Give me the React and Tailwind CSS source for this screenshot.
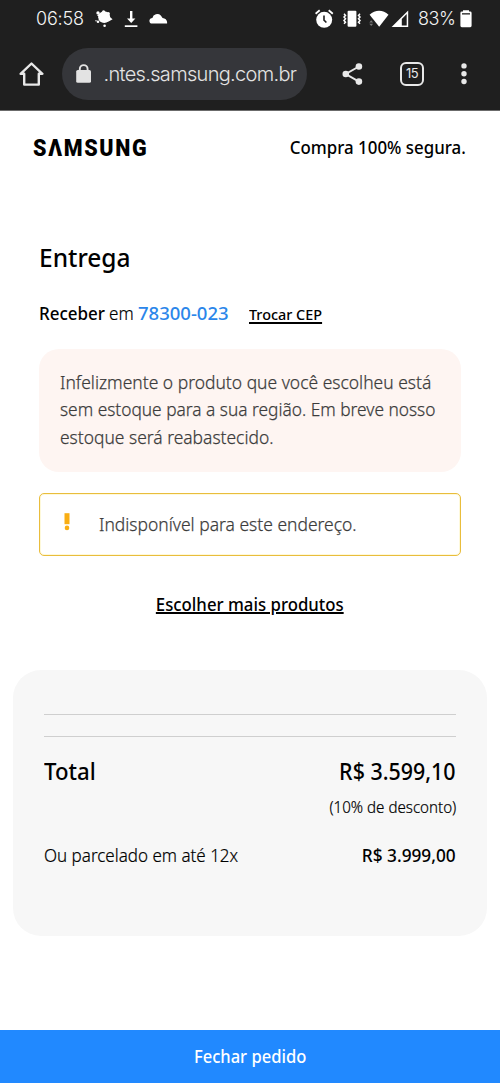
function BlobIcon() {
  return (
    <svg className="h-[18px] w-[18px]" viewBox="0 0 18 18" fill="#fff">
      <ellipse cx="9.200" cy="7.200" rx="6" ry="5.900" />
      <circle cx="3" cy="2.900" r="1.700" />
      <circle cx="8.600" cy="1.900" r="1.600" />
      <circle cx="13.200" cy="3.600" r="1.700" />
      <path d="M13.500 6 17.600 9.200 13.200 11.800ZM2 5.200 5.500 3v5Z" />
      <circle cx="1" cy="10.700" r=".7" />
      <circle cx="3" cy="11.700" r="1.300" />
      <circle cx="9.600" cy="15.700" r="1.300" />
    </svg>
  );
}

function DownloadIcon() {
  return (
    <svg className="h-[18px] w-[14px]" viewBox="0 0 14 18" fill="#fff">
      <path d="M6 1h2.400v7.600h3L7.200 13 3 8.600h3Z" />
      <rect x=".8" y="15.300" width="12.600" height="1.700" />
    </svg>
  );
}

function CloudIcon() {
  return (
    <svg className="h-[12px] w-[19px]" viewBox="0 0 19 12" fill="#fff">
      <path d="M3.600 10.600A3 3 0 0 1 .4 7.700C.4 6 1.700 4.900 3.400 4.900A5 5 0 0 1 11.800 2.400L13.600 4.900c2.500.2 4.500 2 4.500 4.300V10.600Z" />
    </svg>
  );
}

function AlarmIcon() {
  return (
    <svg className="h-[20px] w-[20px]" viewBox="0 0 20 20" fill="none">
      <circle cx="10.200" cy="10.800" r="8" fill="#fff" />
      <path d="M1.600 4.800 5.700 1.300M14.700 1.300l4.100 3.500" stroke="#fff" strokeWidth="1.800" />
      <path d="M10 6.600v4.600l2.400 2.300" stroke="#1f1f1f" strokeWidth="1.600" />
    </svg>
  );
}

function VibrateIcon() {
  return (
    <svg className="h-[18px] w-[18px]" viewBox="0 0 18 18" fill="none">
      <rect x="4.600" y=".8" width="8.800" height="16" rx="1" fill="#fff" />
      <path
        d="M1 3.800l1.500 1.600L1 7.100l1.500 1.700L1 10.500l1.500 1.700L1 13.800M17 3.800l-1.500 1.600L17 7.100l-1.500 1.700 1.500 1.700-1.500 1.700L17 13.800"
        stroke="#fff"
        strokeWidth="1.500"
      />
    </svg>
  );
}

function WifiIcon() {
  return (
    <svg className="h-[18px] w-[20px]" viewBox="0 0 20 18">
      <path d="M.6 4.800C6-.6 14.200-.6 19.500 4.800L10.200 16.800Z" fill="#fff" />
      <path d="m2.200 10.200 1.900 2.200H.3ZM2.200 16l1.900-2.200H.3Z" fill="#777" />
    </svg>
  );
}

function SignalIcon() {
  return (
    <svg className="h-[18px] w-[18px]" viewBox="0 0 18 18">
      <path d="M17.200.4V17H.6Z" fill="#fff" />
      <path d="M15.700 4v11.500h-4.900V9Z" fill="#1f1f1f" />
    </svg>
  );
}

function BatteryIcon() {
  return (
    <svg className="h-[18px] w-[12px]" viewBox="0 0 12 18">
      <path d="M3 1.500V.3h6v1.200h1.200a1.400 1.400 0 0 1 1.400 1.400v12.900a1.400 1.400 0 0 1-1.400 1.400H1.800A1.400 1.400 0 0 1 .4 15.800V2.900a1.400 1.400 0 0 1 1.400-1.400Z" fill="#fff" />
      <rect x="2" y="3.200" width="8" height="1.300" fill="#1f1f1f" />
    </svg>
  );
}

function HomeIcon() {
  return (
    <svg className="h-[26px] w-[26px]" viewBox="0 0 26 26" fill="none" stroke="#e8e8e8" strokeWidth="2.400" strokeLinejoin="round">
      <path d="M2.600 12.800 13.500 2.500l10.900 10.300h-3.600V23.600H6.200V12.800Z" />
    </svg>
  );
}

function LockIcon() {
  return (
    <svg className="h-[20px] w-[16px]" viewBox="0 0 16 20">
      <path d="M3.800 8V5a3.900 3.900 0 0 1 7.800 0V8" fill="none" stroke="#e3e3e3" strokeWidth="1.900" />
      <rect x=".2" y="6" width="14.800" height="12.800" rx="1.600" fill="#e3e3e3" />
    </svg>
  );
}

function ShareIcon() {
  return (
    <svg className="h-[24px] w-[22px]" viewBox="0 0 22 24" fill="#e8e8e8">
      <path d="M17.900 4.500 4.800 12l13.100 7.700" fill="none" stroke="#e8e8e8" strokeWidth="2" />
      <circle cx="17.900" cy="4.500" r="3.300" />
      <circle cx="4.800" cy="12" r="3.300" />
      <circle cx="17.900" cy="19.600" r="3.300" />
    </svg>
  );
}

function MenuIcon() {
  return (
    <svg className="h-[22px] w-[6px]" viewBox="0 0 6 22" fill="#e8e8e8">
      <circle cx="3" cy="2.900" r="2.700" />
      <circle cx="3" cy="10.700" r="2.700" />
      <circle cx="3" cy="18.500" r="2.700" />
    </svg>
  );
}

function Line({ as: Tag = "span", className, children }) {
  return <Tag className={`block whitespace-nowrap ${className}`}>{children}</Tag>;
}

function BrowserChrome() {
  return (
    <div className="flex h-[111px] flex-col border-b border-[#6b6b6b] bg-[#1f1f1f]">
      <div className="flex h-[37px] items-center pl-9 font-['Inter',sans-serif] text-[18px] font-light text-[#f4f4f4]">
        <span className="w-[59px] tracking-[-0.2px]">06:58</span>
        <BlobIcon />
        <div className="w-[11px]" />
        <DownloadIcon />
        <div className="w-[11px]" />
        <CloudIcon />
        <div className="w-[146px]" />
        <AlarmIcon />
        <div className="w-[9px]" />
        <VibrateIcon />
        <div className="w-[8px]" />
        <WifiIcon />
        <div className="w-[2px]" />
        <SignalIcon />
        <div className="w-[9px]" />
        <span className="w-[42px] tracking-[-0.5px]">83%</span>
        <BatteryIcon />
      </div>
      <div className="flex h-[73px] items-center pl-[18px]">
        <HomeIcon />
        <div className="ml-[18px] flex h-[52px] w-[245px] items-center rounded-full bg-[#35363a] pl-[14px]">
          <LockIcon />
          <span className="ml-[11.500px] font-['Inter',sans-serif] text-[20px] font-light tracking-[-0.680px] text-[#e3e3e3]">
            .ntes.samsung.com.br
          </span>
        </div>
        <div className="ml-[34px] flex">
          <ShareIcon />
        </div>
        <div className="ml-[37px] flex h-[24px] w-[24px] items-center justify-center rounded-[6px] border-[2.500px] border-[#e8e8e8] font-['Inter',sans-serif] text-[13px] font-normal tracking-[-0.7px] text-[#e8e8e8]">
          15
        </div>
        <div className="ml-[37px] flex">
          <MenuIcon />
        </div>
      </div>
    </div>
  );
}

export default function App() {
  return (
    <div className="flex h-[1083px] w-[500px] flex-col overflow-hidden bg-white font-['Noto_Sans',sans-serif] text-black">
      <BrowserChrome />

      <header className="flex h-[73px] items-center justify-between pr-[34px] pl-[33px]">
        <span className="origin-left scale-x-[0.935] pt-[3px] font-['Roboto',sans-serif] text-[23px] font-black tracking-[1.800px]">
          SΛMSUNG
        </span>
        <Line className="origin-right scale-x-[0.937] text-[18px] font-medium">Compra 100% segura.</Line>
      </header>

      <main className="flex flex-1 flex-col">
        <section className="flex flex-col px-[39px] pt-[53px]">
          <Line as="h1" className="w-fit origin-left scale-x-[0.980] text-[25px] leading-[40px] font-medium">
            Entrega
          </Line>
          <div className="mt-[22px] flex items-baseline text-[18.500px] leading-[28px]">
            <div className="w-[70px]">
              <Line className="w-fit origin-left scale-x-[0.918] font-medium">Receber</Line>
            </div>
            <div className="w-[29px]">
              <Line className="w-fit origin-left scale-x-[0.920] font-light [-webkit-text-stroke:0.2px]">em</Line>
            </div>
            <div className="w-[111px]">
              <Line className="w-fit origin-left font-medium text-[#2b86ea]">78300-023</Line>
            </div>
            <Line
              as="a"
              className="w-fit origin-left scale-x-[0.960] text-[15px] leading-[17px] font-medium underline decoration-[1.500px] underline-offset-2 [text-decoration-skip-ink:none]"
            >
              Trocar CEP
            </Line>
          </div>

          <div className="mt-[22px] flex h-[123px] flex-col rounded-[20px] bg-[#fef5f2] pt-[20px] pl-[21px] text-[19px] leading-[27.300px] font-light text-[#3c3c3c] [-webkit-text-stroke:0.25px]">
            <Line className="w-fit origin-left scale-x-[0.919]">Infelizmente o produto que você escolheu está</Line>
            <Line className="w-fit origin-left scale-x-[0.911]">sem estoque para a sua região. Em breve nosso</Line>
            <Line className="w-fit origin-left scale-x-[0.917]">estoque será reabastecido.</Line>
          </div>

          <div className="mt-[21px] flex h-[63px] items-center rounded-[5px] border border-[#e9bd3c] pl-[24px] ring-1 ring-[#fdf3b5]/50 ring-inset">
            <svg className="-mt-[6px] h-[18px] w-[6px]" viewBox="0 0 6 18" fill="#f9ae13">
              <rect x=".5" y=".2" width="5" height="11" />
              <circle cx="3" cy="14.900" r="2.300" />
            </svg>
            <Line className="ml-[29px] origin-left scale-x-[0.919] text-[19px] font-light text-[#3c3c3c] [-webkit-text-stroke:0.25px]">
              Indisponível para este endereço.
            </Line>
          </div>

          <Line
            as="a"
            className="mt-[36px] scale-x-[0.932] self-center text-[18px] leading-[24px] font-medium underline decoration-2 underline-offset-[1px] [text-decoration-skip-ink:auto]"
          >
            Escolher mais produtos
          </Line>
        </section>

        <section className="mx-[13px] mt-[54px] flex h-[266px] flex-col rounded-[28px] bg-[#f7f7f7] px-[31px] pt-[44px]">
          <div className="h-[22px] border-t border-[#cfcfcf]" />
          <div className="border-t border-[#cfcfcf]" />
          <div className="mt-[16px] flex justify-between text-[24px] leading-[36px] font-medium">
            <Line className="origin-left scale-x-[0.925]">Total</Line>
            <Line className="origin-right scale-x-[0.892]">R$ 3.599,10</Line>
          </div>
          <div className="mt-[6px] flex justify-end text-[16px] leading-[24px] font-light [-webkit-text-stroke:0.2px]">
            <Line className="origin-right scale-x-[0.945]">(10% de desconto)</Line>
          </div>
          <div className="mt-[22px] flex justify-between text-[18.500px] leading-[28px]">
            <Line className="origin-left scale-x-[0.919] font-light [-webkit-text-stroke:0.2px]">
              Ou parcelado em até 12x
            </Line>
            <Line className="origin-right scale-x-[0.932] font-medium">R$ 3.999,00</Line>
          </div>
        </section>
      </main>

      <button className="flex h-[53px] items-center justify-center bg-[#2189ff] text-[18px] font-medium text-white">
        <Line className="scale-x-[0.920]">Fechar pedido</Line>
      </button>
    </div>
  );
}
